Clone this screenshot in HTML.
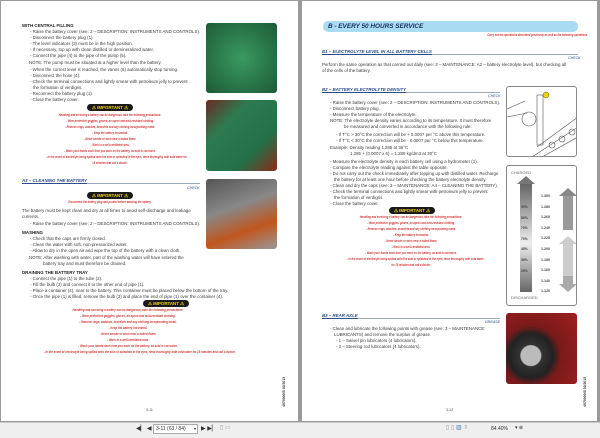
<!DOCTYPE html>
<html><head><meta charset="utf-8"><style>
*{margin:0;padding:0;box-sizing:border-box}
body{width:600px;height:438px;background:#9a9a9a;position:relative;overflow:hidden;font-family:"Liberation Sans",sans-serif}
.pg{position:absolute;background:#fff;top:1px;height:420px}
.t{position:absolute;font-size:4.4px;line-height:5px;white-space:nowrap;color:#3a3a3a}
.b{font-weight:bold;color:#222}
.r{position:absolute;font-size:3.6px;line-height:6px;color:#d23a3a;text-align:center;white-space:nowrap;font-style:italic;font-weight:bold;transform:scaleX(0.72);transform-origin:50% 0}
.imp{position:absolute;width:46px;height:7px;background:#1a1a1a;border-radius:4px;color:#f5d000;font-size:4.4px;font-weight:bold;text-align:center;line-height:7px}
.h{position:absolute;font-size:4.4px;font-weight:bold;font-style:italic;color:#2a4b8c;text-decoration:underline;border-bottom:1px solid #9ab;white-space:nowrap;line-height:5px}
.ck{position:absolute;font-size:3.6px;color:#2a4b8c;font-style:italic}
.ph{position:absolute;border-radius:3px;overflow:hidden}
.num{position:absolute;font-size:3.6px;color:#444}
.vt{position:absolute;font-size:3.4px;color:#333;writing-mode:vertical-rl;transform:rotate(180deg);font-weight:bold}
</style></head><body>
<div class="pg" style="left:1px;width:297px">
<div class="t b" style="left:21px;top:22px">WITH CENTRAL FILLING</div>
<div class="t" style="left:29px;top:28px">- Raise the battery cover (see: 2 – DESCRIPTION: INSTRUMENTS AND CONTROLS).</div>
<div class="t" style="left:29px;top:34px">- Disconnect the battery plug (1).</div>
<div class="t" style="left:29px;top:40px">- The level indicators (3) must be in the high position.</div>
<div class="t" style="left:29px;top:46px">- If necessary, top up with clean distilled or demineralized water.</div>
<div class="t" style="left:29px;top:52px">- Connect the pipe (4) to the pipe of the pump (5).</div>
<div class="t" style="left:28px;top:59px">NOTE: The pump must be situated at a higher level than the battery.</div>
<div class="t" style="left:29px;top:66px">- When the correct level is reached, the vanes (6) automatically stop turning.</div>
<div class="t" style="left:29px;top:72px">- Disconnect the hose (4).</div>
<div class="t" style="left:29px;top:78px">- Check the terminal connections and lightly smear with petroleum jelly to prevent</div>
<div class="t" style="left:32px;top:84px">the formation of verdigris.</div>
<div class="t" style="left:29px;top:90px">- Reconnect the battery plug (1).</div>
<div class="t" style="left:29px;top:96px">- Close the battery cover.</div>
<div class="imp" style="left:86px;top:103px">⚠ IMPORTANT ⚠</div>
<div class="r" style="left:20px;width:178px;top:111px">Handling and servicing a battery can be dangerous, take the following precautions:<br>- Wear protective goggles, gloves, an apron and acid-resistant clothing.<br>- Remove rings, watches, bracelets and any clothing incorporating metal.<br>- Keep the battery horizontal.<br>- Never smoke or work near a naked flame.<br>- Work in a well-ventilated area.<br>- Wash your hands each time you work on the battery, as acid is corrosive.<br>- In the event of electrolyte being spilled onto the skin or splashed in the eyes, rinse thoroughly with cold water for<br>15 minutes and call a doctor.</div>
<div class="h" style="left:21px;top:177px;width:178px">A3 – CLEANING THE BATTERY</div>
<div class="ck" style="left:186px;top:185px">CHECK</div>
<div class="imp" style="left:86px;top:191px">⚠ IMPORTANT ⚠</div>
<div class="r" style="left:20px;width:178px;top:198px">Disconnect the battery plug and protect before washing the battery.</div>
<div class="t" style="left:21px;top:207px">The battery must be kept clean and dry at all times to avoid self-discharge and leakage</div>
<div class="t" style="left:21px;top:213px">currents.</div>
<div class="t" style="left:29px;top:220px">- Raise the battery cover (see: 2 – DESCRIPTION: INSTRUMENTS AND CONTROLS).</div>
<div class="t b" style="left:21px;top:229px">WASHING</div>
<div class="t" style="left:29px;top:235px">- Check that the caps are firmly closed.</div>
<div class="t" style="left:29px;top:241px">- Clean the water with soft, non-pressurized water.</div>
<div class="t" style="left:29px;top:247px">- Allow to dry in the open air and wipe the top of the battery with a clean cloth.</div>
<div class="t" style="left:28px;top:254px">NOTE: After washing with water, part of the washing water will have entered the</div>
<div class="t" style="left:42px;top:260px">battery tray and must therefore be drained.</div>
<div class="t b" style="left:21px;top:269px">DRAINING THE BATTERY TRAY</div>
<div class="t" style="left:29px;top:275px">- Connect the pipe (1) to the tube (2).</div>
<div class="t" style="left:29px;top:281px">- Fill the bulb (3) and connect it to the other end of pipe (1).</div>
<div class="t" style="left:29px;top:287px">- Place a container (4), near to the battery. This container must be placed below the bottom of the tray.</div>
<div class="t" style="left:29px;top:293px">- Once the pipe (1) is filled, remove the bulb (3) and place the end of pipe (1) over the container (4).</div>
<div class="imp" style="left:142px;top:299px">⚠ IMPORTANT ⚠</div>
<div class="r" style="left:19px;width:216px;top:306px;transform:scaleX(0.78)">Handling and servicing a battery can be dangerous, take the following precautions:<br>- Wear protective goggles, gloves, an apron and acid-resistant clothing.<br>- Remove rings, watches, bracelets and any clothing incorporating metal.<br>- Keep the battery horizontal.<br>- Never smoke or work near a naked flame.<br>- Work in a well-ventilated area.<br>- Wash your hands each time you work on the battery, as acid is corrosive.<br>- In the event of electrolyte being spilled onto the skin or splashed in the eyes, rinse thoroughly with cold water for 15 minutes and call a doctor.</div>
<div class="ph" style="left:205px;top:22px;width:71px;height:70px;background:radial-gradient(circle at 50% 50%,#3a9a60,#1d5a38);"></div>
<div class="ph" style="left:205px;top:99px;width:71px;height:71px;background:linear-gradient(135deg,#6a2a20,#2e7a50 30%,#247048 70%,#8a2a1a)"></div>
<div class="ph" style="left:205px;top:178px;width:71px;height:70px;background:linear-gradient(160deg,#555,#888 40%,#c0561e 70%,#999)"></div>
<div class="num" style="left:145px;top:407px">3-11</div>
<div class="vt" style="left:281px;top:376px">4970000/B 02/2013</div>
</div>
<div class="pg" style="left:302px;width:295px">
<div style="position:absolute;left:21px;top:20px;width:255px;height:11px;background:#a9dbf3;border-radius:5px"></div>
<div style="position:absolute;left:26px;top:20px;font-size:6.4px;line-height:11px;font-weight:bold;font-style:italic;color:#16305e">B - EVERY 50 HOURS SERVICE</div>
<div class="r" style="left:150px;width:126px;top:31px;text-align:right;transform-origin:100% 0">Carry out the operations described previously as well as the following operations.</div>
<div class="h" style="left:20px;top:48px;width:256px">B1 – ELECTROLYTE LEVEL IN ALL BATTERY CELLS</div>
<div class="ck" style="left:266px;top:55px">CHECK</div>
<div class="t" style="left:20px;top:61px">Perform the same operation as that carried out daily (see: 3 – MAINTENANCE: A2 – battery electrolyte level), but checking all</div>
<div class="t" style="left:20px;top:67px">of the cells of the battery.</div>
<div class="h" style="left:20px;top:86px;width:178px">B2 – BATTERY ELECTROLYTE DENSITY</div>
<div class="ck" style="left:186px;top:93px">CHECK</div>
<div class="t" style="left:28px;top:99px">- Raise the battery cover (see: 2 – DESCRIPTION: INSTRUMENTS AND CONTROLS).</div>
<div class="t" style="left:28px;top:105px">- Disconnect battery plug.</div>
<div class="t" style="left:28px;top:111px">- Measure the temperature of the electrolyte.</div>
<div class="t" style="left:28px;top:117px">NOTE: The electrolyte density varies according to its temperature. It must therefore</div>
<div class="t" style="left:42px;top:123px">be measured and converted in accordance with the following rule:</div>
<div class="t" style="left:34px;top:131px">- If T°C &gt; 30°C the correction will be + 0.0007 per °C above this temperature.</div>
<div class="t" style="left:34px;top:137px">- If T°C &lt; 30°C the correction will be - 0.0007 per °C below this temperature.</div>
<div class="t" style="left:28px;top:144px">Example: Density reading 1.285 at 36°C</div>
<div class="t" style="left:48px;top:150px">1.285 + (0.0007 x 6) = 1.289 kg/dm3 at 30°C</div>
<div class="t" style="left:28px;top:158px">- Measure the electrolyte density in each battery cell using a hydrometer (1).</div>
<div class="t" style="left:28px;top:164px">- Compare the electrolyte reading against the table opposite.</div>
<div class="t" style="left:28px;top:170px">- Do not carry out the check immediately after topping up with distilled water. Recharge</div>
<div class="t" style="left:32px;top:176px">the battery for at least one hour before checking the battery electrolyte density.</div>
<div class="t" style="left:28px;top:182px">- Clean and dry the caps (see: 3 – MAINTENANCE: A4 – CLEANING THE BATTERY).</div>
<div class="t" style="left:28px;top:188px">- Check the terminal connections and lightly smear with petroleum jelly to prevent</div>
<div class="t" style="left:32px;top:194px">the formation of verdigris.</div>
<div class="t" style="left:28px;top:200px">- Close the battery cover.</div>
<div class="imp" style="left:87px;top:206px">⚠ IMPORTANT ⚠</div>
<div class="r" style="left:20px;width:178px;top:213px">Handling and servicing a battery can be dangerous, take the following precautions:<br>- Wear protective goggles, gloves, an apron and acid-resistant clothing.<br>- Remove rings, watches, bracelets and any clothing incorporating metal.<br>- Keep the battery horizontal.<br>- Never smoke or work near a naked flame.<br>- Work in a well-ventilated area.<br>- Wash your hands each time you work on the battery, as acid is corrosive.<br>- In the event of electrolyte being spilled onto the skin or splashed in the eyes, rinse thoroughly with cold water<br>for 15 minutes and call a doctor.</div>
<div class="h" style="left:20px;top:312px;width:178px">B3 – REAR AXLE</div>
<div class="ck" style="left:183px;top:319px">GREASE</div>
<div class="t" style="left:28px;top:325px">- Clean and lubricate the following points with grease (see: 3 – MAINTENANCE:</div>
<div class="t" style="left:32px;top:331px">LUBRICANTS) and remove the surplus of grease.</div>
<div class="t" style="left:34px;top:337px">- 1 – Swivel pin lubricators (4 lubricators).</div>
<div class="t" style="left:34px;top:343px">- 2 – Steering rod lubricators (4 lubricators).</div>
<div class="ph" style="left:204px;top:85px;width:71px;height:71px;border:0.6px solid #888;background:#fff">
<svg width="71" height="71" viewBox="0 0 71 71"><g fill="none" stroke="#555" stroke-width="0.6"><path d="M0 22 L18 14 M0 30 L20 26"/><circle cx="22" cy="32" r="7"/><rect x="30" y="8" width="6" height="50"/><path d="M25 70 L71 40 M35 70 L71 50 M30 60 L71 30"/><circle cx="45" cy="58" r="3"/><circle cx="55" cy="52" r="3"/><circle cx="65" cy="45" r="3"/></g><circle cx="39" cy="8" r="3" fill="#f0d000" stroke="#333" stroke-width="0.4"/></svg></div>
<div class="ph" style="left:204px;top:164px;width:71px;height:141px;border:0.6px solid #888;background:#fff">
<div style="position:absolute;left:4px;top:4px;font-size:4px;color:#666">CHARGED</div>
<div style="position:absolute;left:10px;top:10px;width:0;height:0;border-left:9px solid transparent;border-right:9px solid transparent;border-bottom:8px solid #777"></div>
<div style="position:absolute;left:13px;top:18px;width:12px;height:108px;background:linear-gradient(#666,#eee 55%,#666)"></div>
<div style="position:absolute;left:4px;top:129px;font-size:4px;color:#666">DISCHARGED</div>
<div style="position:absolute;left:52px;top:22px;width:0;height:0;border-left:9px solid transparent;border-right:9px solid transparent;border-bottom:8px solid #888"></div>
<div style="position:absolute;left:56px;top:30px;width:10px;height:34px;background:#999"></div>
<div style="position:absolute;left:52px;top:70px;width:0;height:0;border-left:9px solid transparent;border-right:9px solid transparent;border-bottom:8px solid #ccc"></div>
<div style="position:absolute;left:56px;top:78px;width:10px;height:32px;background:#ccc"></div>
<div style="position:absolute;left:56px;top:110px;width:10px;height:8px;background:#aaa"></div>
<div style="position:absolute;left:52px;top:118px;width:0;height:0;border-left:9px solid transparent;border-right:9px solid transparent;border-top:8px solid #aaa"></div>
<div style="position:absolute;left:34px;top:25px;font-size:3.6px;line-height:10.6px;color:#444;font-weight:bold">1.300<br>1.280<br>1.260<br>1.240<br>1.220<br>1.200<br>1.180<br>1.160<br>1.140<br>1.120</div>
<div style="position:absolute;left:14px;top:36px;font-size:3.4px;line-height:10.6px;color:#444;font-weight:bold">90%<br>80%<br>70%<br>70%<br>45%<br>35%<br>25%</div>
</div>
<div class="ph" style="left:204px;top:312px;width:71px;height:71px;background:radial-gradient(circle at 35% 60%,#bbb 0,#bbb 10px,#333 11px,#222 22px,#7a1a1a 30px,#a02020)"></div>
<div class="num" style="left:144px;top:407px">3-12</div>
<div class="vt" style="left:281px;top:376px">4970000/B 02/2013</div>
</div>
<div style="position:absolute;left:0;top:422px;width:600px;height:16px;background:#efefef;border-top:1px solid #ccc"></div>
<div style="position:absolute;left:136px;top:425px;font-size:6px;color:#333">◀▏ ◀</div>
<div style="position:absolute;left:153px;top:424px;width:45px;height:10px;border:1px solid #aaa;background:#fff;font-size:5px;line-height:8px;padding-left:2px;color:#333">3-11 (63 / 84) <span style="float:right;font-size:4px;padding-right:1px">▾</span></div>
<div style="position:absolute;left:201px;top:425px;font-size:6px;color:#333">▶ ▶▏</div>
<div style="position:absolute;left:220px;top:424px;font-size:6px;color:#999">▯ ▭</div>
<div style="position:absolute;left:446px;top:424px;font-size:6px;color:#999">▯ ▯ <span style="color:#4a7cc0">▥</span> ⇳</div>
<div style="position:absolute;left:491px;top:426px;font-size:5px;color:#333">84.40%</div>
<div style="position:absolute;left:515px;top:425px;font-size:5px;color:#333">▾ ⊕</div>
</body></html>
